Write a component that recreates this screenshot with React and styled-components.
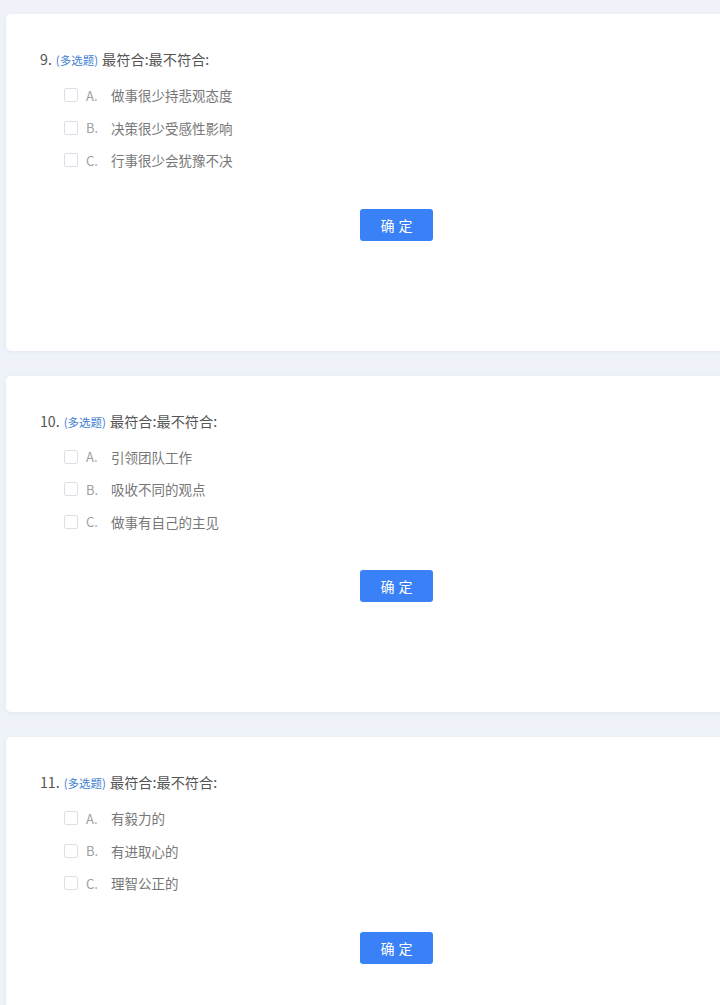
import React from "react";
import styled, { createGlobalStyle } from "styled-components";

const Global = createGlobalStyle`
  html, body { margin: 0; padding: 0; background: #eff3f9; }
  body { font-family: "Noto Sans CJK SC", "Noto Sans", sans-serif; overflow-x: hidden; }
`;

const Page = styled.div`
  padding: 14px 0 0 6px;
  display: flex;
  flex-direction: column;
  gap: 25px;
  overflow: hidden;
`;

const Card = styled.section`
  background: #fff;
  border-radius: 5px;
  margin-right: -67px;
  padding: 35px 0 110px 34px;
  box-shadow: 0 1px 4px rgba(180, 195, 220, 0.25);
  display: flex;
  flex-direction: column;
`;

const Title = styled.div`
  font-size: 14.2px;
  height: 20px;
  line-height: 20px;
  color: #555;
  display: flex;
  align-items: baseline;
  gap: 4px;
`;

const Tag = styled.span`
  font-size: 11.5px;
  color: #3f7fd0;
`;

const Options = styled.div`
  display: flex;
  flex-direction: column;
  margin-top: 10px;
  padding-left: 24px;
`;

const Option = styled.label`
  display: flex;
  align-items: center;
  height: 32.5px;
  font-size: 13.5px;
  color: #777;
`;

const Box = styled.span`
  width: 14px;
  height: 14px;
  border: 1px solid #dcdfe6;
  border-radius: 2px;
  background: #fff;
  box-sizing: border-box;
  margin-right: 8px;
`;

const Letter = styled.span`
  width: 25px;
  color: #a0a0a0;
  font-size: 13px;
`;

const ButtonRow = styled.div`
  display: flex;
  justify-content: center;
  margin-top: 32px;
  margin-left: -34px;
`;

const Confirm = styled.button`
  width: 73px;
  height: 32px;
  border: none;
  border-radius: 3px;
  background: #3a80f7;
  color: #fff;
  font-family: inherit;
  font-size: 14px;
  letter-spacing: 4px;
  text-indent: 4px;
  cursor: pointer;
`;

const questions = [
  { n: 9, opts: ["做事很少持悲观态度", "决策很少受感性影响", "行事很少会犹豫不决"] },
  { n: 10, opts: ["引领团队工作", "吸收不同的观点", "做事有自己的主见"] },
  { n: 11, opts: ["有毅力的", "有进取心的", "理智公正的"] },
];

export default function App() {
  return (
    <>
      <Global />
      <Page>
        {questions.map((q) => (
          <Card key={q.n}>
            <Title>
              <span>{q.n}.</span>
              <Tag>(多选题)</Tag>
              <span>最符合:最不符合:</span>
            </Title>
            <Options>
              {q.opts.map((o, i) => (
                <Option key={i}>
                  <Box />
                  <Letter>{"ABC"[i]}.</Letter>
                  <span>{o}</span>
                </Option>
              ))}
            </Options>
            <ButtonRow>
              <Confirm>确定</Confirm>
            </ButtonRow>
          </Card>
        ))}
      </Page>
    </>
  );
}
